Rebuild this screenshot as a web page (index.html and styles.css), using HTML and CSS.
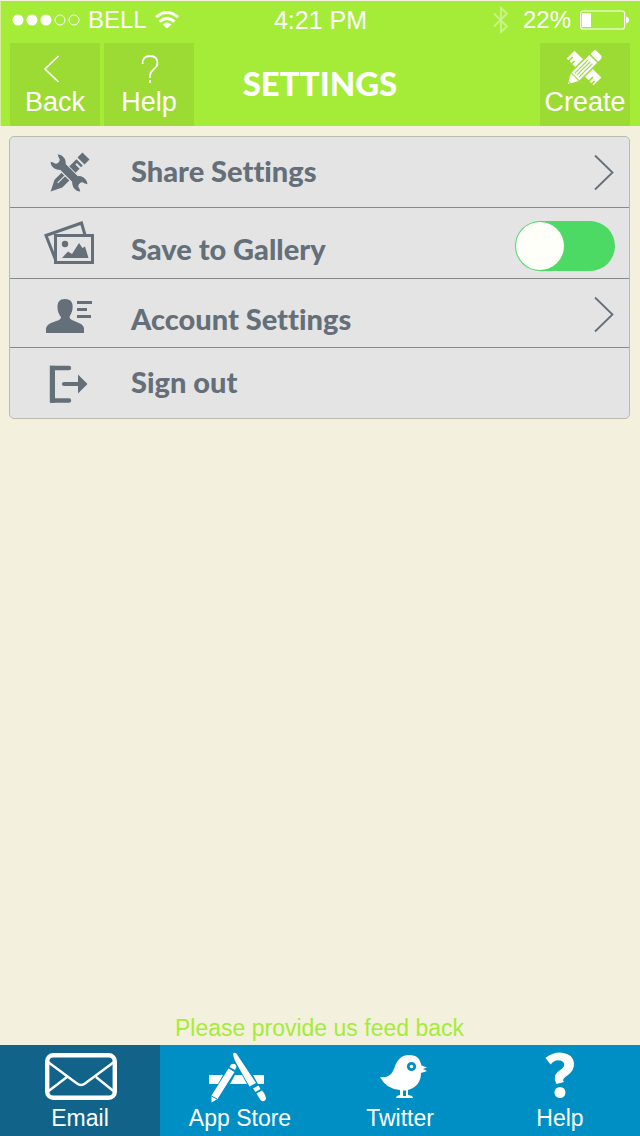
FILE: index.html
```html
<!DOCTYPE html>
<html lang="en">
<head>
<meta charset="utf-8">
<meta name="viewport" content="width=device-width, initial-scale=1">
<title>Settings</title>
<link rel="stylesheet" href="styles.css">
</head>
<body>
<div class="app">
  <header class="header">
    <div class="status">
      <div class="status-left">
        <svg width="68" height="14" viewBox="0 0 68 14" aria-hidden="true">
          <g fill="#fff"><circle cx="6" cy="7" r="5.5"/><circle cx="20" cy="7" r="5.5"/><circle cx="34" cy="7" r="5.5"/></g>
          <g fill="none" stroke="#fff"><circle cx="48" cy="7" r="5"/><circle cx="62" cy="7" r="5"/></g>
        </svg>
        <span>BELL</span>
        <svg width="24" height="18" viewBox="0 0 24 18" aria-hidden="true">
          <g fill="none" stroke="#fff" stroke-width="3"><path d="M1 6.2Q12-3.2 23 6.2"/><path d="M4.600 10.600Q12 4.200 19.400 10.600"/></g>
          <path d="M7.600 13.400Q12 9.800 16.400 13.400L12 17.600Z" fill="#fff"/>
        </svg>
      </div>
      <span class="clock">4:21 PM</span>
      <div class="status-right">
        <svg class="bluetooth" width="16" height="28" viewBox="0 0 16 28" aria-hidden="true">
          <path d="M1 7.500L14 20.500L8 26V2L14 7.500L1 20.500" fill="none" stroke="#fff" stroke-width="2"/>
        </svg>
        <span>22%</span>
        <svg width="50" height="20" viewBox="0 0 50 20" aria-hidden="true">
          <rect x="1.6" y="1" width="44" height="18" rx="2.5" fill="none" stroke="#fff" stroke-width="1.2"/>
          <rect x="3" y="3" width="9" height="14" fill="#fff"/>
          <path d="M47 6.5Q50 7 50 10T47 13.5Z" fill="#fff"/>
        </svg>
      </div>
    </div>
    <nav class="nav">
      <div class="nav-left">
        <button class="nav-button" type="button">
          <svg width="36" height="36" viewBox="0 0 36 36" aria-hidden="true"><path d="M21.500 6L8 19L21.500 32" fill="none" stroke="#fff" stroke-width="1.7"/></svg>
          <span>Back</span>
        </button>
        <button class="nav-button" type="button">
          <svg width="36" height="36" viewBox="0 0 36 36" aria-hidden="true"><path d="M11.500 14Q11.500 6 19 6T26.500 13Q26.500 16 23 19Q19 22.500 19 26V28M19 30V33" fill="none" stroke="#fff" stroke-width="1.8"/></svg>
          <span>Help</span>
        </button>
      </div>
      <h1 class="title">SETTINGS</h1>
      <button class="nav-button" type="button">
        <svg width="36" height="36" viewBox="0 0 36 36" aria-hidden="true">
          <g transform="translate(17 18) rotate(45)" fill="#fff">
            <path d="M-19-5.500H19V5.500H17.500V1.500H16V5.500H13.500V0H12V5.500H-11V1.500H-12.500V5.500H-15V0H-16.500V5.500H-19Z"/>
          </g>
          <g transform="translate(17 18) rotate(-45)">
            <rect x="-14" y="-7" width="30" height="14" fill="#9bdb34"/>
            <path d="M-23 0L-13-5.500V5.500Z" fill="#fff"/>
            <path d="M-20.500-2V2" stroke="#9bdb34"/>
            <rect x="-12" y="-5.500" width="25" height="11" fill="#fff"/>
            <path d="M14.500-5.500H18Q21-5.500 21-2.500V2.500Q21 5.500 18 5.500H14.500Z" fill="#fff"/>
            <path d="M-10-2.800H9M-10 0H9M-10 2.800H9" stroke="#9bdb34" stroke-width="1.1"/>
          </g>
        </svg>
        <span>Create</span>
      </button>
    </nav>
  </header>

  <main class="main">
    <ul class="settings">
      <li class="row">
        <a class="row-body" href="#share">
          <svg class="row-icon" width="60" height="52" viewBox="0 0 60 52" aria-hidden="true">
            <g transform="translate(30 27) rotate(-45)" fill="#646f79">
              <path d="M-26 0L-15-5.500H-5V5.500H-15Z"/>
              <path d="M-15-1H-5" stroke="#e4e4e4" stroke-width="1.2"/>
              <path d="M4-4.500H15V4.500H12.500V-1.500H10.500V4.500H4Z"/>
              <rect x="17" y="-5" width="7" height="10"/>
            </g>
            <path transform="translate(30 27) rotate(45)" d="M-21-5Q-18-8-13-7Q-10-6-8.500-4H8.500Q10-6 13-7Q18-8 21-5L18-3.500Q15-3.500 15 0T18 3.500L21 5Q18 8 13 7Q10 6 8.500 4H-8.500Q-10 6-13 7Q-18 8-21 5L-18 3.500Q-15 3.500-15 0T-18-3.500Z" fill="#646f79" stroke="#e4e4e4" stroke-width="1.600" paint-order="stroke"/>
          </svg>
          <span class="row-label">Share Settings</span>
          <svg width="22" height="36" viewBox="0 0 22 36" aria-hidden="true"><path d="M2 1.500L19.500 18.500L2 35.500" fill="none" stroke="#646f79" stroke-width="1.800"/></svg>
        </a>
      </li>
      <li class="row">
        <label class="row-body" for="gallery">
          <svg class="row-icon" width="60" height="52" viewBox="0 0 60 52" aria-hidden="true">
            <path d="M46 18L42.500 6L7 18.500L17 44" fill="none" stroke="#646f79" stroke-width="3"/>
            <rect x="16.500" y="18.500" width="37" height="27" fill="#e4e4e4" stroke="#646f79" stroke-width="3"/>
            <circle cx="26" cy="27" r="3.200" fill="#646f79"/>
            <path d="M23 41L29 34.500L33 37L40 26L43.500 31L46 29.500L49.500 41Z" fill="#646f79"/>
          </svg>
          <span class="row-label row-label-low">Save to Gallery</span>
          <input class="switch" id="gallery" type="checkbox" role="switch" checked>
        </label>
      </li>
      <li class="row">
        <a class="row-body row-body-short" href="#account">
          <svg class="row-icon" width="60" height="52" viewBox="0 0 60 52" aria-hidden="true">
            <path d="M26 12C32 12 34.500 16 33.500 22C33 26 31 28 30.500 30Q30.500 32 33 33L41 36.500Q45 38.500 45 42V46H7V42Q7 38.500 12 36L20 33Q22 32 22 30C20 27 18.500 25 18.500 20C18.500 15 20.500 12 26 12Z" fill="#646f79"/>
            <path d="M38 15.500H53M38 22.500H48M38 29.500H52" stroke="#646f79" stroke-width="2.800"/>
          </svg>
          <span class="row-label row-label-low">Account Settings</span>
          <svg width="22" height="36" viewBox="0 0 22 36" aria-hidden="true"><path d="M2 2.500L19.500 19.500L2 36.500" fill="none" stroke="#646f79" stroke-width="1.800"/></svg>
        </a>
      </li>
      <li class="row">
        <a class="row-body" href="#signout">
          <svg class="row-icon" width="60" height="52" viewBox="0 0 60 52" aria-hidden="true">
            <path d="M30 11H13V43.500H30" fill="none" stroke="#646f79" stroke-width="4.400" stroke-linecap="round"/>
            <path d="M11 8.800H16V45.700H11Z" fill="#646f79"/>
            <path d="M25 27H40" stroke="#646f79" stroke-width="4.200" stroke-linecap="round"/>
            <path d="M39 17.500L48.500 27L39 36.500Z" fill="#646f79"/>
          </svg>
          <span class="row-label">Sign out</span>
        </a>
      </li>
    </ul>
    <p class="feedback">Please provide us feed back</p>
  </main>

  <nav class="tabs">
    <a class="tab tab-active" href="#email">
      <svg width="74" height="56" viewBox="0 0 74 56" aria-hidden="true">
        <rect x="4.200" y="6.200" width="67.600" height="42.600" rx="6" fill="none" stroke="#fff" stroke-width="4.400"/>
        <path d="M5 13L34 34.500Q38 37.500 42 34.500L71 13M5 42.500L24 28M71 42.500L53 28" fill="none" stroke="#fff" stroke-width="2.400"/>
      </svg>
      <span>Email</span>
    </a>
    <a class="tab" href="#store">
      <svg width="60" height="56" viewBox="0 0 60 56" aria-hidden="true">
        <g fill="#fff">
          <path d="M-1 26H13L8 35H-1ZM25 26H32L37 35H20ZM43 26H54V35H48Z"/>
          <path d="M23.500 4Q26 2.500 28 7L46 34L39.500 37.500L25 12Q22.500 6 23.500 4Z"/>
          <path d="M43 39.500L48.500 36.500L50.500 40L45.500 43ZM46.500 44.500L52 41.500Q56 46 56 50Q54 54 50.500 51Z"/>
          <path d="M18.500 19.500L24.500 23L7.500 50L1.500 53.500L1.500 46.500ZM21 15.500Q25.500 13.500 26.500 17.500L25 21L19.500 18Z"/>
        </g>
        <path d="M1.500 47L7 50" stroke="#008fc5"/>
      </svg>
      <span>App Store</span>
    </a>
    <a class="tab" href="#twitter">
      <svg width="60" height="56" viewBox="0 0 60 56" aria-hidden="true">
        <path d="M10 28Q20 30 24 20C27 10 32 6 39 6C47 6 50 10 51.500 16.500L57 18.500L53 20L57 22L51 24C51 33 46 39 38 41V46Q43 46.500 43 49H26Q26 46.500 30 46V41Q16 40 10 28Z" fill="#fff"/>
        <path d="M34.500 41.500V47" stroke="#008fc5" stroke-width="3"/>
        <circle cx="41.500" cy="17.500" r="3.200" fill="#fff" stroke="#008fc5" stroke-width="2.800"/>
      </svg>
      <span>Twitter</span>
    </a>
    <a class="tab" href="#help">
      <svg width="36" height="56" viewBox="0 0 36 56" aria-hidden="true">
        <path d="M3.500 9Q10 3.500 18 3.500Q32 4.500 32 15.500Q32 21.500 26 26Q21 29 21 31.500L22 33L14.500 35Q12 31 13 27Q14 23.500 19 20.500Q23 17.500 22 14.500Q20 10.500 14 11.500Q11 12.500 8.500 15.500Z" fill="#fff"/>
        <circle cx="18" cy="43.500" r="5.500" fill="#fff"/>
      </svg>
      <span>Help</span>
    </a>
  </nav>
</div>
</body>
</html>
```
FILE: styles.css
```css
* {
  box-sizing: border-box;
}

body {
  margin: 0;
  background: #f4f0de;
  font-family: "Liberation Sans", Arial, sans-serif;
}

svg {
  display: block;
  flex: none;
  overflow: visible;
}

.app {
  display: flex;
  flex-direction: column;
  min-height: 100vh;
}

.header {
  border-top: 1px solid #f4f0de;
  border-left: 1px solid #d9ec9a;
  background: #a4ec37;
  color: #fff;
}

.status {
  display: grid;
  grid-template-columns: 1fr auto 1fr;
  align-items: center;
  height: 42px;
  padding: 0 11px 4px;
  font-size: 24px;
  line-height: 28px;
}

.status-left,
.status-right {
  display: flex;
  align-items: center;
  gap: 8px;
}

.status-right {
  justify-content: flex-end;
}

.clock {
  font-size: 25px;
}

.bluetooth {
  margin-right: 6px;
  opacity: 0.4;
}

.nav {
  display: grid;
  grid-template-columns: 1fr auto 1fr;
  align-items: stretch;
  padding: 0 10px 0 9px;
}

.nav-left {
  display: flex;
  gap: 4px;
}

.nav-button {
  display: flex;
  flex-direction: column;
  align-items: center;
  width: 90px;
  height: 83px;
  padding: 7px 0 0;
  border: 0;
  background: #9bdb34;
  color: #fff;
  font-family: inherit;
  font-size: 27px;
  line-height: 32px;
  white-space: nowrap;
}

.nav > .nav-button {
  justify-self: end;
}

.title {
  margin: 0;
  font-family: Lato, sans-serif;
  font-size: 33px;
  font-weight: 900;
  line-height: 80px;
}

.main {
  display: flex;
  flex: 1;
  flex-direction: column;
  justify-content: space-between;
  padding: 10px 10px 0 9px;
}

.settings {
  margin: 0;
  padding: 0;
  border: 1px solid #bcbab0;
  border-radius: 5px;
  background: #e4e4e4;
  list-style: none;
}

.row + .row {
  border-top: 1px solid #88898a;
}

.row-body {
  display: flex;
  align-items: center;
  height: 70px;
  padding: 0 14px 0 29px;
  color: #646f79;
  text-decoration: none;
}

.row-body-short {
  height: 68px;
}

.row-icon {
  margin-right: 32px;
}

.row-label {
  flex: 1;
  padding-bottom: 2px;
  font-family: Lato, sans-serif;
  font-size: 29px;
  font-variant-ligatures: none;
  font-weight: 900;
  line-height: 34px;
}

.row-label-low {
  padding-top: 12px;
  padding-bottom: 0;
}

.switch {
  appearance: none;
  display: flex;
  width: 100px;
  height: 50px;
  margin: 6px 0 0;
  padding: 1px;
  border-radius: 25px;
  background: #b9bcbf;
}

.switch::before {
  content: "";
  width: 48px;
  height: 48px;
  border-radius: 50%;
  background: #fffffa;
}

.switch:checked {
  background: #4cd964;
}

.feedback {
  margin: 0;
  padding-bottom: 3px;
  color: #a4ec37;
  font-size: 23px;
  line-height: 28px;
  text-align: center;
}

.tabs {
  display: grid;
  grid-template-columns: repeat(4, 1fr);
  background: #008fc5;
}

.tab {
  display: flex;
  flex-direction: column;
  align-items: center;
  padding: 4px 0 5px;
  color: #fff;
  font-size: 23px;
  line-height: 26px;
  text-decoration: none;
}

.tab-active {
  background: #116389;
}
```
